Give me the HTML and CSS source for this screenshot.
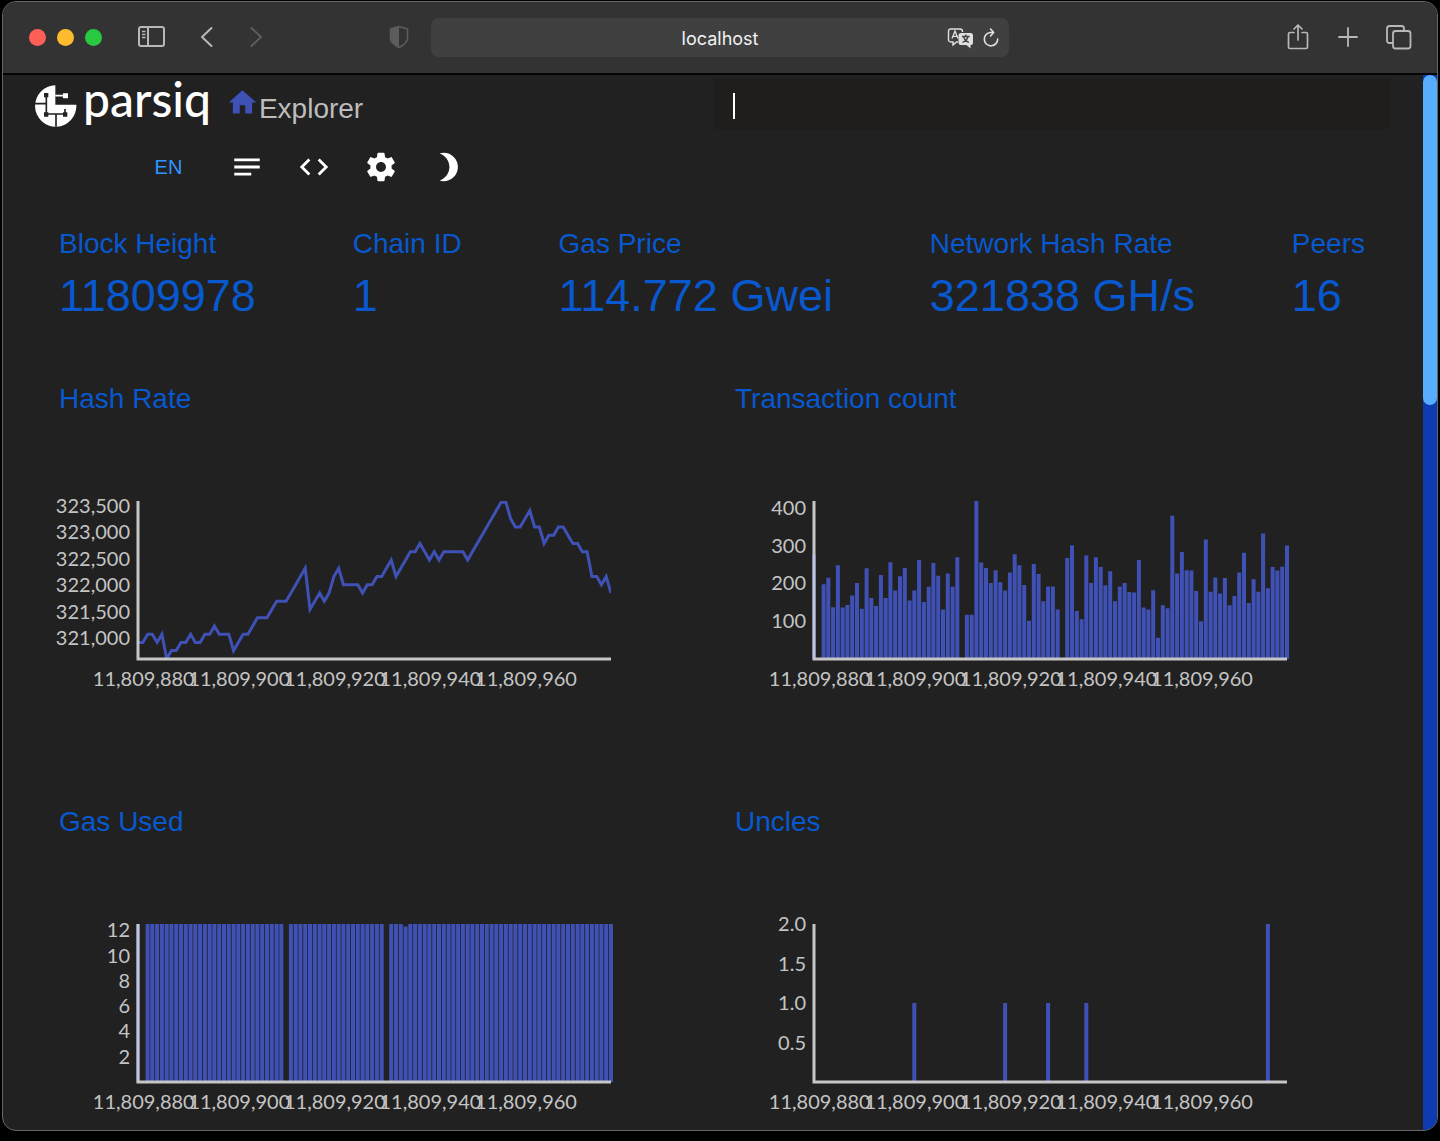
FILE: index.html
```html
<!DOCTYPE html>
<html lang="en">
<head>
<meta charset="utf-8">
<title>Parsiq Explorer</title>
<link rel="stylesheet" href="styles.css">
</head>
<body>
<div class="window">
  <div class="titlebar">
    <div class="titlebar-left">
      <div class="lights">
        <span class="light light-red"></span>
        <span class="light light-yellow"></span>
        <span class="light light-green"></span>
      </div>
      <button class="tool tool-sidebar" aria-label="Sidebar">
        <svg width="28" height="24" viewBox="0 0 28 24" fill="none" stroke="currentColor" stroke-width="2"><rect x="1" y="1" width="25" height="19" rx="2"/><path d="M10 1v19"/><path d="M4 5.500h3.500M4 8.500h3.500M4 11.500h3.500" stroke-width="1.300"/></svg>
      </button>
      <button class="tool tool-back" aria-label="Back">
        <svg width="24" height="24" viewBox="0 0 24 24" fill="none" stroke="currentColor" stroke-width="2" stroke-linecap="round" stroke-linejoin="round"><path d="M16.500 2L7 11l9.500 9"/></svg>
      </button>
      <button class="tool tool-forward" aria-label="Forward" disabled>
        <svg width="24" height="24" viewBox="0 0 24 24" fill="none" stroke="currentColor" stroke-width="2" stroke-linecap="round" stroke-linejoin="round"><path d="M7.500 2l9.500 9-9.500 9"/></svg>
      </button>
      <button class="tool tool-shield" aria-label="Privacy report">
        <svg width="20" height="24" viewBox="0 0 20 24"><path d="M10 .500L18.500 3v9c0 4-3.500 7-8.500 9.500C5 19 1.500 16 1.500 12V3z" fill="none" stroke="currentColor" stroke-width="1.600" stroke-linejoin="round"/><path d="M10 .500v21C5 19 1.500 16 1.500 12V3z" fill="currentColor"/></svg>
      </button>
    </div>
    <div class="address">
      <span class="address-text">localhost</span>
      <div class="address-tools">
        <button class="tool" aria-label="Translate">
          <svg width="28" height="22" viewBox="0 0 28 22"><path d="M4 2h9q2.500 0 2.500 2.500V5M11 15H9.500L6 18v-3H4q-2.500 0-2.500-2.500v-8Q1.500 2 4 2" fill="none" stroke="currentColor" stroke-width="1.400"/><path d="M5 11.500L8 4l3 7.500M6 9.300h4" fill="none" stroke="currentColor" stroke-width="1.300"/><path d="M14 6h9.500Q26 6 26 8.500v7q0 2.500-2.500 2.500v3.500L19.500 18H14q-2.500 0-2.500-2.500v-7Q11.500 6 14 6" fill="currentColor"/><path d="M15 9.500h7.500M18.800 7.500v2M21 9.500q-1 4-5.500 6M16.500 9.500q1 4 5.500 6" fill="none" stroke="#404040" stroke-width="1.300"/></svg>
        </button>
        <button class="tool" aria-label="Reload">
          <svg width="18" height="22" viewBox="0 0 18 22" fill="none" stroke="currentColor" stroke-width="1.600" stroke-linecap="round" stroke-linejoin="round"><path d="M8 5.500A6.700 6.700 0 1 0 15.700 12M8 5.500h3M8.500 2l3.200 3.500L8.500 9"/></svg>
        </button>
      </div>
    </div>
    <div class="titlebar-right">
      <button class="tool" aria-label="Share">
        <svg width="24" height="28" viewBox="0 0 24 28" fill="none" stroke="currentColor" stroke-width="1.700" stroke-linecap="round" stroke-linejoin="round"><path d="M8 8.500H4Q2.500 8.500 2.500 10v13Q2.500 24.500 4 24.500h16q1.500 0 1.500-1.500V10q0-1.500-1.500-1.500h-4M12 16V1M8 5l4-4 4 4"/></svg>
      </button>
      <button class="tool" aria-label="New tab">
        <svg width="20" height="28" viewBox="0 0 20 28" fill="none" stroke="currentColor" stroke-width="1.800" stroke-linecap="round"><path d="M1 13h18M10 4v18"/></svg>
      </button>
      <button class="tool" aria-label="Tab overview">
        <svg width="26" height="28" viewBox="0 0 26 28" fill="none" stroke="currentColor" stroke-width="1.800"><rect x="7" y="7" width="17.500" height="17.500" rx="2.500"/><path d="M7 19H3.500Q1 19 1 16.500v-12Q1 2 3.500 2h12Q18 2 18 4.500V7"/></svg>
      </button>
    </div>
  </div>

  <div class="viewport">
    <div class="page">
      <header class="header">
        <div class="header-main">
          <div class="brand">
            <svg class="brand-mark" width="42" height="42" viewBox="0 0 126 126" aria-hidden="true">
              <path d="M61 1v58h63A62 62 0 1 1 61 1z" fill="#fff"/>
              <path d="M34 30v57h56V72M0 56h32M63 87v38" fill="none" stroke="#222" stroke-width="5"/>
              <path d="M27 24h13v13H27zM27 82h13v13H27zM84 82h13v13H84z" fill="#222"/>
              <path d="M61 32h26" stroke="#fff" stroke-width="5"/><path d="M84 25h15v15H84z" fill="#fff"/>
            </svg>
            <span class="brand-name">parsiq</span>
            <a class="home" href="#"><svg width="33" height="33" viewBox="0 0 24 24" aria-hidden="true"><path d="M10 20v-6h4v6h5v-8h3L12 3 2 12h3v8z" fill="currentColor"/></svg><span class="home-label">Explorer</span></a>
          </div>
          <div class="search"><input class="search-input" type="text" aria-label="Search"></div>
        </div>
        <nav class="actions">
          <button class="lang">EN</button>
          <button class="action" aria-label="Documentation"><svg width="34" height="34" viewBox="0 0 24 24"><path d="M3 11h18v2H3zM3 16h12v2H3zM3 6h18v2H3z"/></svg></button>
          <button class="action" aria-label="Source code"><svg width="34" height="34" viewBox="0 0 24 24"><path d="M9.400 16.600L4.800 12l4.600-4.600L8 6l-6 6 6 6 1.400-1.400zm5.200 0l4.600-4.600-4.600-4.600L16 6l6 6-6 6-1.400-1.400z"/></svg></button>
          <button class="action" aria-label="Settings"><svg width="34" height="34" viewBox="0 0 24 24"><path d="M19.430 12.980c.04-.32.07-.64.07-.98s-.03-.66-.07-.98l2.110-1.650c.19-.15.24-.42.12-.64l-2-3.460c-.12-.22-.39-.3-.61-.22l-2.490 1c-.52-.4-1.080-.73-1.690-.98l-.38-2.650C14.460 2.180 14.250 2 14 2h-4c-.25 0-.46.18-.49.42l-.38 2.650c-.61.25-1.170.59-1.690.98l-2.490-1c-.23-.09-.49 0-.61.22l-2 3.460c-.13.22-.07.49.12.64l2.110 1.650c-.04.32-.07.65-.07.98s.03.66.07.98l-2.110 1.650c-.19.15-.24.42-.12.64l2 3.460c.12.22.39.3.61.22l2.490-1c.52.4 1.080.73 1.690.98l.38 2.650c.03.24.24.42.49.42h4c.25 0 .46-.18.49-.42l.38-2.650c.61-.25 1.170-.59 1.690-.98l2.490 1c.23.09.49 0 .61-.22l2-3.460c.12-.22.07-.49-.12-.64l-2.110-1.650zM12 15.500c-1.930 0-3.500-1.570-3.500-3.500s1.570-3.500 3.500-3.500 3.500 1.570 3.500 3.500-1.570 3.500-3.500 3.500z"/></svg></button>
          <button class="action" aria-label="Dark mode"><svg width="34" height="34" viewBox="0 0 24 24"><path d="M9 2c-1.050 0-2.050.16-3 .46 4.060 1.270 7 5.060 7 9.540 0 4.480-2.940 8.270-7 9.540.95.3 1.950.46 3 .46 5.520 0 10-4.480 10-10S14.520 2 9 2z"/></svg></button>
        </nav>
      </header>

      <main>
        <dl class="stats">
          <div><dt>Block Height</dt><dd>11809978</dd></div>
          <div><dt>Chain ID</dt><dd>1</dd></div>
          <div><dt>Gas Price</dt><dd>114.772 Gwei</dd></div>
          <div><dt>Network Hash Rate</dt><dd>321838 GH/s</dd></div>
          <div><dt>Peers</dt><dd>16</dd></div>
        </dl>
        <div class="charts">
          <section><h2>Hash Rate</h2><svg class="chart" id="hash-rate" viewBox="0 0 676 285"></svg></section>
          <section><h2>Transaction count</h2><svg class="chart" id="transactions" viewBox="0 0 676 285"></svg></section>
          <section><h2>Gas Used</h2><svg class="chart" id="gas-used" viewBox="0 0 676 285"></svg></section>
          <section><h2>Uncles</h2><svg class="chart" id="uncles" viewBox="0 0 676 285"></svg></section>
        </div>
      </main>
    </div>
    <div class="scrollbar"><div class="thumb"></div></div>
  </div>
</div>
<script src="charts.js"></script>
</body>
</html>
```
FILE: styles.css
```css
* { box-sizing: border-box; }

body {
  margin: 0;
  padding: 1px 2px 10px;
  height: 100vh;
  background: #000;
  color: #bdbdbd;
  font-family: "Liberation Sans", Arial, sans-serif;
}

button {
  margin: 0;
  padding: 0;
  border: 0;
  background: none;
  color: inherit;
  font: inherit;
}

svg { display: block; }

.window {
  display: flex;
  flex-direction: column;
  height: 100%;
  overflow: hidden;
  border: 1px solid #666;
  border-radius: 14px;
  background: #212121;
}

/* Browser chrome */
.titlebar {
  display: grid;
  grid-template-columns: 1fr minmax(0, 578px) 1fr;
  align-items: center;
  flex: none;
  height: 73px;
  border-bottom: 2px solid #050505;
  background: #333;
  color: #b8b8b8;
}

.titlebar-left {
  display: flex;
  align-items: center;
  padding: 0 22px 0 26px;
}

.lights { display: flex; gap: 11px; }
.light { width: 17px; height: 17px; border-radius: 50%; }
.light-red { background: #ff5f57; }
.light-yellow { background: #febc2e; }
.light-green { background: #28c840; }

.tool-sidebar { margin-left: 36px; }
.tool-back { margin-left: 29px; }
.tool-forward { margin-left: 25px; color: #5c5c5c; }
.tool-shield { margin-left: auto; color: #5c5c5c; }

.address {
  display: grid;
  grid-template-columns: 1fr auto 1fr;
  align-items: center;
  height: 39px;
  padding: 0 9px;
  border-radius: 8px;
  background: #404040;
  color: #e0e0e0;
}

.address-text {
  grid-column: 2;
  padding-top: 2px;
  color: #f2f2f2;
  font: 18px/24px Inter, sans-serif;
}

.address-tools { display: flex; justify-content: flex-end; gap: 7px; }

.titlebar-right {
  display: flex;
  justify-content: flex-end;
  align-items: center;
  gap: 28px;
  padding-right: 25px;
}

/* Scrolled page */
.viewport { display: flex; flex: 1; min-height: 0; }
.page { flex: 1; min-width: 0; }
.scrollbar { flex: none; width: 14px; background: #0f3bb0; }
.thumb { height: 31.3%; border-radius: 7px; background: #57adff; }

.header { padding: 3px 33px 0 32px; }
.header-main { display: flex; align-items: center; justify-content: space-between; }
.brand { display: flex; align-items: center; }
.brand-mark { margin-top: 3px; }

.brand-name {
  margin: 0 0 10px 6px;
  color: #fff;
  font: 500 48px/42px Lato, sans-serif;
}

.home {
  display: flex;
  align-items: center;
  margin-left: 15px;
  color: #3f51b5;
  text-decoration: none;
}

.home svg { margin-bottom: 4px; }

.home-label {
  margin-top: 10px;
  color: #bdbdbd;
  font-size: 28px;
  line-height: 36px;
}

.search {
  position: relative;
  width: 50%;
  flex: none;
}

.search-input {
  display: block;
  width: 100%;
  height: 52px;
  padding: 0 20px;
  border: 0;
  border-radius: 6px;
  outline: 0;
  background: #1f1e1c;
  color: #fff;
  font: 22px "Liberation Sans", sans-serif;
}

.search::before {
  content: "";
  position: absolute;
  top: 15px;
  left: 20px;
  width: 2px;
  height: 26px;
  background: #fff;
}

.actions { display: flex; align-items: center; height: 74px; padding-left: 101px; }
.lang { width: 65px; color: #2f95ff; font-size: 20px; text-align: center; }
.action { display: grid; place-items: center; width: 67px; color: #fff; }
.action:nth-child(2) { margin-left: 12px; }
.action path { fill: currentColor; }

.stats {
  display: flex;
  justify-content: space-between;
  margin: 0;
  padding: 22px 58px 0 56px;
  color: #0858cf;
}

.stats dt { font-size: 28px; line-height: 36px; }
.stats dd { margin: 0; font-size: 45px; line-height: 68px; }

.charts {
  display: grid;
  grid-template-columns: 1fr 1fr;
  row-gap: 102px;
  padding: 51px 12px 0 56px;
}

.charts h2 {
  margin: 0;
  color: #0858cf;
  font-size: 28px;
  font-weight: 400;
  line-height: 36px;
}

.chart { width: 100%; overflow: visible; }
.chart text { fill: #c4c4c4; font: 20px Lato, sans-serif; }
.tick-x { text-anchor: middle; }
.tick-y { text-anchor: end; }
.axis { fill: none; stroke: #c6c6c6; stroke-width: 3; }
.line { fill: none; stroke: #3f51b5; stroke-width: 3; }
.bars { fill: none; stroke: #3f51b5; stroke-width: 4; }
```
FILE: charts.js
```js
const LEFT = 79, RIGHT = 552, TOP = 84, BASE = 242, COUNT = 99;
const FIRST_BLOCK = 11809879;

// Hash rate per block, in steps of 156 GH/s above 320930.
const hashSteps = [
  0,0,1,1,0,1,-2,-1,-1,0,0,1,0,0,1,1,2,1,1,1,-1,0,1,1,2,
  3,3,3,4,5,5,5,6,7,8,9,4,5,6,5,6,8,9,7,7,7,7,6,7,7,
  8,8,9,10,8,9,10,11,11,12,11,10,11,10,11,11,11,11,11,10,11,12,13,14,15,
  16,17,17,15,14,14,15,16,14,14,12,13,13,14,14,13,12,12,11,11,8,8,7,8,6
];
const transactions = [
  277,0,198,215,137,248,136,143,168,201,133,240,161,140,222,161,256,181,219,241,155,181,262,151,191,
  254,220,131,226,191,269,0,117,117,418,255,241,201,235,203,181,229,277,248,196,101,251,225,153,192,
  192,131,0,267,300,127,105,274,201,269,243,195,232,153,192,201,177,176,262,136,131,182,56,142,134,
  379,226,283,235,234,180,100,316,178,216,173,214,142,167,229,281,148,211,178,332,187,243,234,244,300
];
const gas = Array.from({ length: 100 }, (_, i) => [1, 31, 52].includes(i) ? 0 : i === 56 ? 12.3 : 12.48);
const uncles = Array.from({ length: 100 }, (_, i) => [21, 40, 49, 57].includes(i) ? 1 : i === 95 ? 2 : 0);

const xAt = i => LEFT + i * (RIGHT - LEFT) / COUNT;

function frame(yTicks) {
  let out = `<path class="axis" d="M${LEFT} ${TOP}V${BASE}H${RIGHT}"/>`;
  for (const [label, y] of yTicks) {
    out += `<text class="tick-y" x="${LEFT - 8}" y="${y + 7}">${label}</text>`;
  }
  for (let block = 11809880; block <= 11809960; block += 20) {
    out += `<text class="tick-x" x="${xAt(block - FIRST_BLOCK) + 1}" y="${BASE + 27}">${block.toLocaleString("en-US")}</text>`;
  }
  return out;
}

function bars(values, perUnit) {
  const d = values.map((v, i) => v ? `M${xAt(i).toFixed(1)} ${BASE}V${(BASE - v * perUnit).toFixed(1)}` : "").join("");
  return `<path class="bars" d="${d}"/>`;
}

function draw(id, content) {
  document.getElementById(id).innerHTML = content;
}

const points = hashSteps.map((s, i) => `${xAt(i).toFixed(1)},${(225.4 - s * 8.24).toFixed(1)}`).join(" ");
draw("hash-rate",
  `<clipPath id="plot"><rect x="${LEFT}" y="${TOP}" width="${RIGHT - LEFT}" height="${BASE - TOP}"/></clipPath>` +
  `<polyline class="line" clip-path="url(#plot)" points="${points}"/>` +
  frame([323500, 323000, 322500, 322000, 321500, 321000].map((v, i) => [v.toLocaleString("en-US"), 89 + i * 26.4])));

const txScale = 0.378;
draw("transactions", bars(transactions, txScale) +
  frame([400, 300, 200, 100].map(v => [v, BASE - v * txScale])));

const gasScale = 12.65;
draw("gas-used", bars(gas, gasScale) +
  frame([12, 10, 8, 6, 4, 2].map(v => [v, BASE - v * gasScale])));

const uncleScale = 79;
draw("uncles", bars(uncles, uncleScale) +
  frame([2, 1.5, 1, 0.5].map(v => [v.toFixed(1), BASE - v * uncleScale])));
```
